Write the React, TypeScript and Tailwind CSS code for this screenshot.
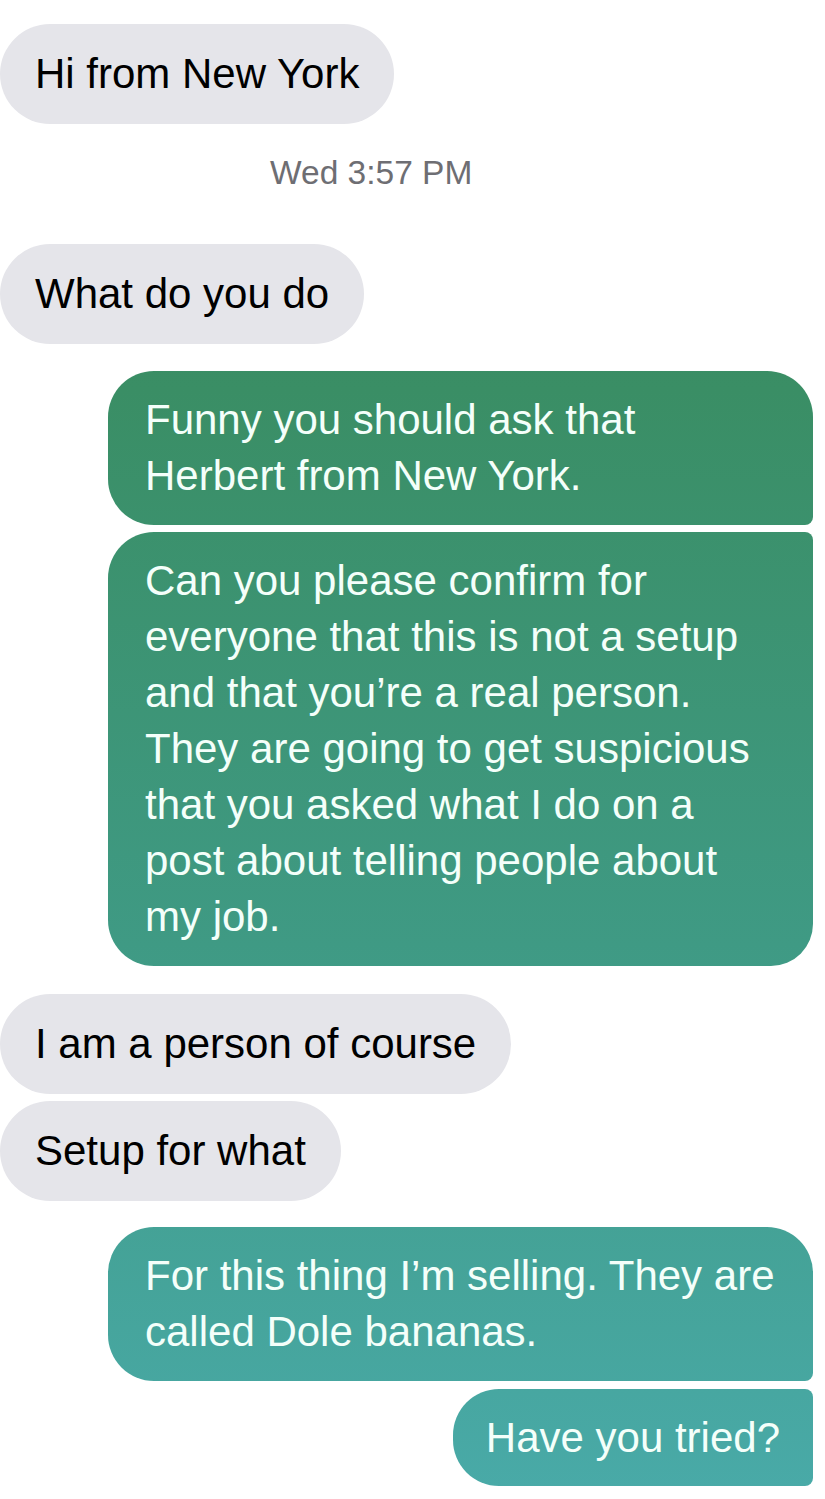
import React from "react";

type Msg =
  | { kind: "in"; text: string; first?: boolean }
  | { kind: "out"; lines: string[]; corner: string; wide: boolean };

const FONT = { fontFamily: '"Liberation Sans", Arial, Helvetica, sans-serif' };

// gradient is pinned to the viewport so every sent bubble shows its own slice
const outBg =
  "bg-fixed bg-[linear-gradient(180deg,#36875c_0%,#3a8e65_26%,#3f9a84_63%,#49aaa8_100%)]";

const InBubble: React.FC<{ text: string; className?: string }> = ({ text, className = "" }) => (
  <div
    className={`w-fit rounded-[50px] bg-[#e5e5ea] px-[35px] py-[22px] text-[42px] leading-[56px] text-black ${className}`}
  >
    {text}
  </div>
);

const OutBubble: React.FC<{ lines: string[]; corner: string; wide?: boolean; className?: string }> = ({
  lines,
  corner,
  wide = true,
  className = "",
}) => (
  <div
    className={`self-end ${outBg} text-[42px] leading-[56px] text-[#f4fffa] ${corner} ${
      wide ? "w-[705px] pl-[37px] pr-6 py-[21px]" : "w-fit px-[33px] pt-[21px] pb-[20px]"
    } ${className}`}
  >
    {lines.map((l, i) => (
      <div key={i} className="whitespace-nowrap">
        {l}
      </div>
    ))}
  </div>
);

export default function App() {
  return (
    <div style={FONT} className="w-[825px] h-[1499px] overflow-hidden bg-white">
      <div className="flex flex-col pt-6 pr-3">
        <InBubble text="Hi from New York" />

        <div className="mt-[29px] ml-[270px] text-[33.5px] leading-[40px] text-[#6e6e73]">Wed 3:57 PM</div>

        <InBubble text="What do you do" className="mt-[51px]" />

        <OutBubble
          className="mt-[27px]"
          corner="rounded-tl-[46px] rounded-bl-[46px] rounded-tr-[46px] rounded-br-[8px]"
          lines={["Funny you should ask that", "Herbert from New York."]}
        />
        <OutBubble
          className="mt-[7px]"
          corner="rounded-tl-[46px] rounded-bl-[46px] rounded-tr-[8px] rounded-br-[42px]"
          lines={[
            "Can you please confirm for",
            "everyone that this is not a setup",
            "and that you\u2019re a real person.",
            "They are going to get suspicious",
            "that you asked what I do on a",
            "post about telling people about",
            "my job.",
          ]}
        />

        <InBubble text="I am a person of course" className="mt-[28px]" />
        <InBubble text="Setup for what" className="mt-[7px]" />

        <OutBubble
          className="mt-[26px]"
          corner="rounded-tl-[46px] rounded-bl-[46px] rounded-tr-[46px] rounded-br-[8px]"
          lines={["For this thing I\u2019m selling. They are", "called Dole bananas."]}
        />
        <OutBubble
          className="mt-[8px]"
          wide={false}
          corner="rounded-tl-[46px] rounded-bl-[46px] rounded-tr-[8px] rounded-br-[8px]"
          lines={["Have you tried?"]}
        />
      </div>
    </div>
  );
}
